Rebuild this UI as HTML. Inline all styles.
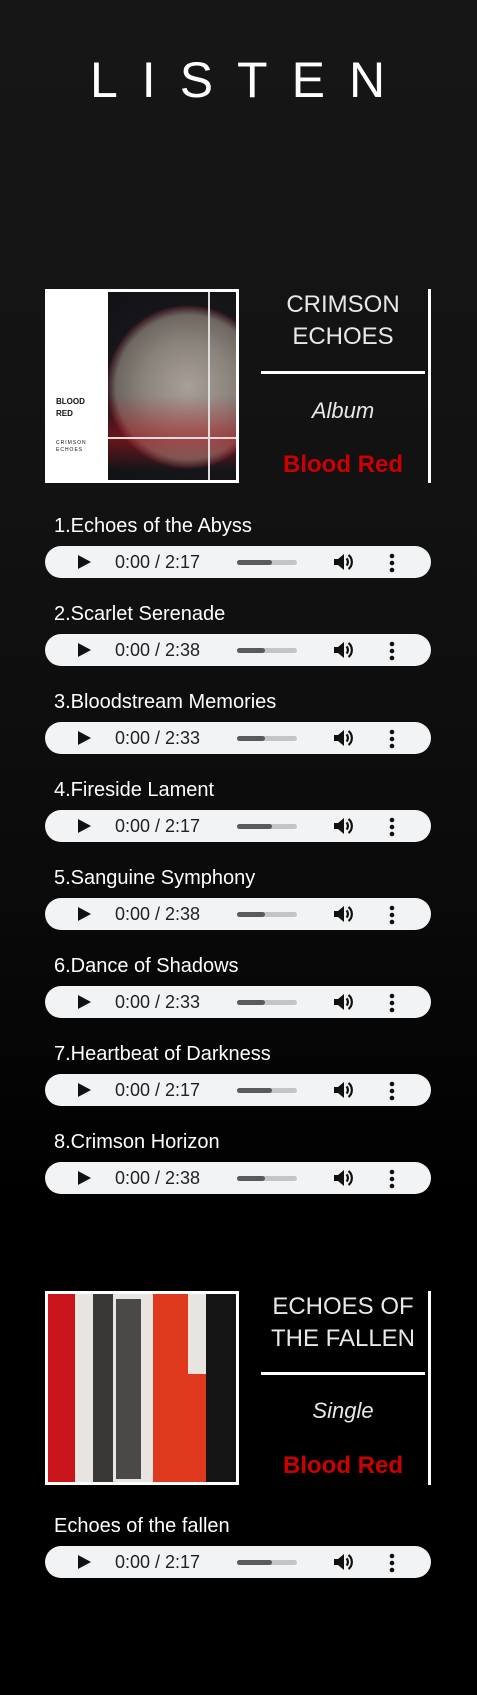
<!DOCTYPE html>
<html><head><meta charset="utf-8"><style>
*{margin:0;padding:0;box-sizing:border-box}
body{width:477px;height:1695px;overflow:hidden;font-family:"Liberation Sans",sans-serif;color:#fff;
background:linear-gradient(180deg,#161616 0px,#121212 500px,#0a0a0a 900px,#000 1200px,#000 1695px);position:relative}
.a{position:absolute}
h1{position:absolute;top:55px;left:90px;font-size:50px;font-weight:300;letter-spacing:24px;line-height:50px}
.art{position:absolute;left:45px;width:194px;height:194px;border:3px solid #fff;overflow:hidden}
.col{position:absolute;left:261px;width:164px;text-align:center}
.t{font-size:24px;font-weight:300;line-height:32px;color:#e8e8e8}
.hr{position:absolute;left:261px;width:164px;height:3px;background:#fff}
.vr{position:absolute;left:428px;width:3px;height:194px;background:#fff}
.typ{font-size:22px;font-style:italic;font-weight:300;color:#e8e8e8}
.br{font-size:24px;font-weight:bold;color:#c00}
.tt{position:absolute;left:54px;font-size:20px;line-height:22px}
.pl{position:absolute;left:45px;width:386px;height:32px;border-radius:16px;background:#f1f3f4;color:#222}
.pl .play{position:absolute;left:33px;top:9px;width:0;height:0;border-left:13px solid #111;border-top:7px solid transparent;border-bottom:7px solid transparent}
.pl .tm{position:absolute;left:70px;top:6px;font-size:18px;line-height:20px;color:#222}
.pl .bar{position:absolute;left:192px;top:14px;width:60px;height:5px;border-radius:3px;background:#c5c5c5}
.pl .bar i{position:absolute;left:0;top:0;height:5px;border-radius:3px;background:#5a5a5a}
.pl svg{position:absolute}
</style></head><body>
<h1>LISTEN</h1>

<div class="art" style="top:289px;background:#fff">
 <div class="a" style="left:60px;top:0;width:128px;height:188px;background:radial-gradient(circle at 80px 95px,#a8a098 0,#8a837c 45px,#6e6660 72px,#3a2026 80px,#16161a 82px,#121216 100%)"></div>
 <div class="a" style="left:60px;top:0;width:128px;height:188px;background:linear-gradient(180deg,transparent 55%,rgba(190,20,30,.5) 78%,transparent 95%)"></div>
 <div class="a" style="left:60px;top:145px;width:128px;height:2px;background:#ddd"></div>
 <div class="a" style="left:160px;top:0;width:2px;height:188px;background:#ddd"></div>
 <div class="a" style="left:8px;top:104px;color:#111;font-size:8px;font-weight:bold;line-height:12px">BLOOD<br>RED</div>
 <div class="a" style="left:8px;top:148px;color:#111;font-size:5px;line-height:7px;letter-spacing:1px">CRIMSON<br>ECHOES</div>
</div>
<div class="col t" style="top:289px">CRIMSON<br>ECHOES</div>
<div class="hr" style="top:371px"></div>
<div class="col typ" style="top:398px">Album</div>
<div class="col br" style="top:451px">Blood Red</div>
<div class="vr" style="top:289px"></div>

<div class="art" style="top:1291px;background:#e8e4df">
 <div class="a" style="left:0;top:0;width:27px;height:188px;background:#c8141a"></div>
 <div class="a" style="left:45px;top:0;width:20px;height:188px;background:#1a1a1a;opacity:.85"></div>
 <div class="a" style="left:68px;top:5px;width:25px;height:180px;background:#222;opacity:.8"></div>
 <div class="a" style="left:105px;top:0;width:35px;height:188px;background:#e03a1e"></div>
 <div class="a" style="left:130px;top:80px;width:30px;height:108px;background:#e03a1e"></div>
 <div class="a" style="left:158px;top:0;width:30px;height:188px;background:#151515"></div>
</div>
<div class="col t" style="top:1291px">ECHOES OF<br>THE FALLEN</div>
<div class="hr" style="top:1372px"></div>
<div class="col typ" style="top:1398px">Single</div>
<div class="col br" style="top:1452px">Blood Red</div>
<div class="vr" style="top:1291px"></div>

<div id="tracks"></div>
<script>
var names=["1.Echoes of the Abyss","2.Scarlet Serenade","3.Bloodstream Memories","4.Fireside Lament","5.Sanguine Symphony","6.Dance of Shadows","7.Heartbeat of Darkness","8.Crimson Horizon"];
var times=["2:17","2:38","2:33","2:17","2:38","2:33","2:17","2:38"];
var fills=[35,28,28,35,28,28,35,28];
function pl(y,t,f){return '<div class="pl" style="top:'+y+'px"><div class="play"></div><div class="tm">0:00 / '+t+'</div><div class="bar"><i style="width:'+f+'px"></i></div>'+
'<svg style="left:287px;top:6px" width="24" height="20" viewBox="0 0 24 20"><path d="M2 7h4l6-5v16l-6-5H2z" fill="#111"/><path d="M14.5 6.5a5 5 0 0 1 0 7" stroke="#111" stroke-width="2.2" fill="none"/><path d="M16.5 3a9 9 0 0 1 0 14" stroke="#111" stroke-width="2.2" fill="none"/></svg>'+
'<svg style="left:344px;top:7px" width="6" height="20"><circle cx="3" cy="3" r="2.3" fill="#111"/><circle cx="3" cy="10" r="2.3" fill="#111"/><circle cx="3" cy="17" r="2.3" fill="#111"/></svg></div>';}
var h="";
for(var i=0;i<8;i++){var y=546+i*88;h+='<div class="tt" style="top:'+(y-31)+'px">'+names[i]+'</div>'+pl(y,times[i],fills[i]);}
h+='<div class="tt" style="top:1515px">Echoes of the fallen</div>'+pl(1546,"2:17",35);
document.getElementById("tracks").innerHTML=h;
</script>
</body></html>
